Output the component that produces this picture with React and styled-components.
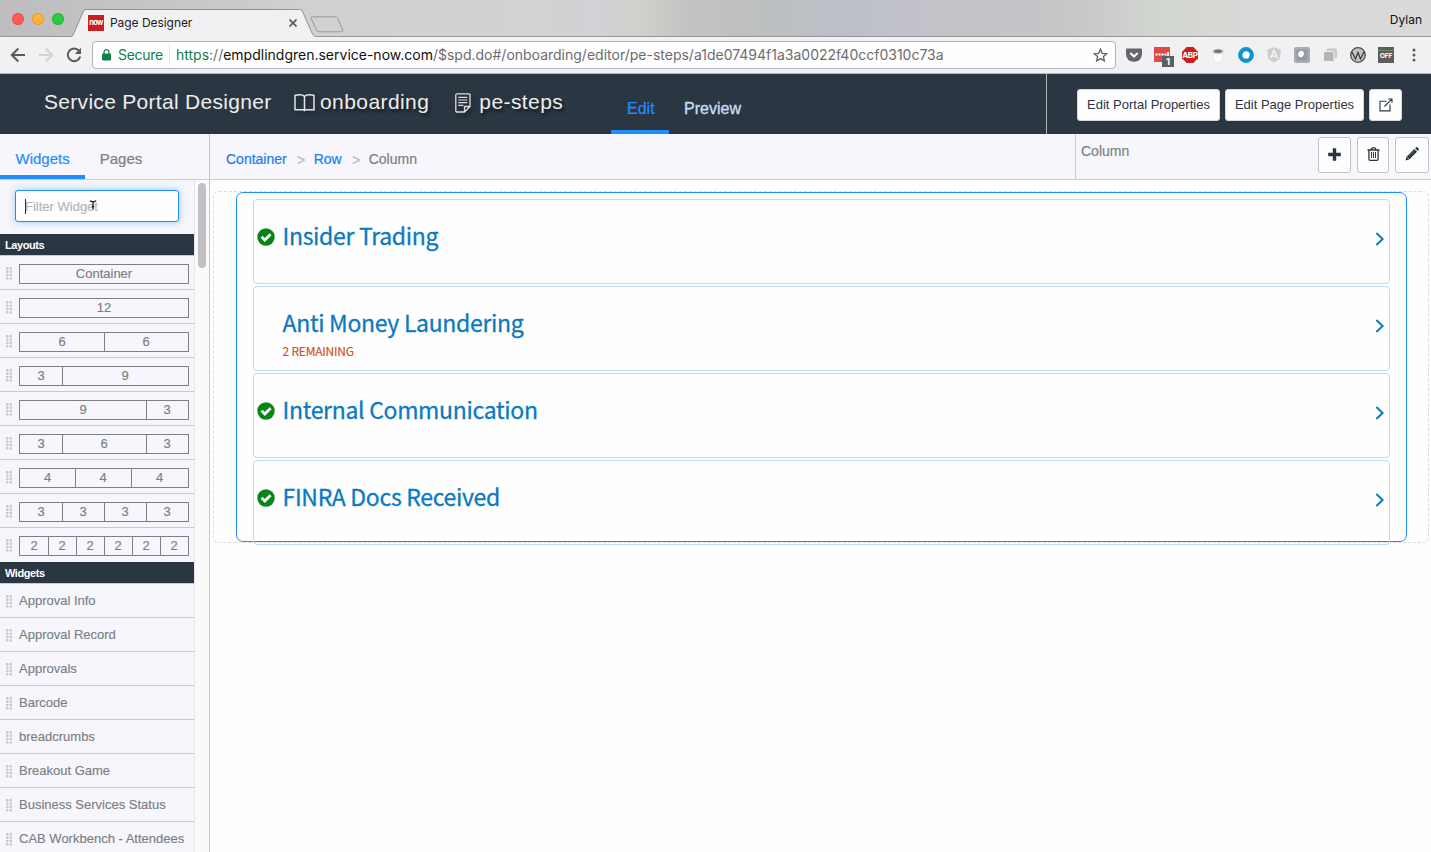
import React from "react";
import styled, { createGlobalStyle } from "styled-components";

const HELV = `"Liberation Sans", Arial, sans-serif`;
const UI = `Inter, Roboto, sans-serif`;
const SOURCE = `"Noto Sans CJK JP", "Noto Sans", sans-serif`;

const Global = createGlobalStyle`
  * { box-sizing: border-box; }
  html, body { margin: 0; padding: 0; background: #fdfefd; }
  body { font-family: ${HELV}; overflow: hidden; }
  svg { display: block; flex: none; }
`;

const Window = styled.div`
  width: 1431px;
  height: 852px;
  display: flex;
  flex-direction: column;
  overflow: hidden;
  background: #fdfefd;
`;

/* ---------- Browser chrome ---------- */

const TabStrip = styled.div`
  height: 37px;
  flex: none;
  display: flex;
  align-items: flex-end;
  border-bottom: 1px solid #97989a;
  background: linear-gradient(90deg, #bdbdbf 0, #c2c2c4 90px, #cbcbcc 240px, #d0d2d2 320px, #d0d3d0 550px, #d2d1d6 585px, #d2d0cc 640px, #c2c2c1 690px, #bcbfc0 770px, #bdc0ca 860px, #c4c3c9 950px, #c5c4c7 1040px, #c8cacb 1090px, #d2d6cf 1160px, #d6d8d4 1220px, #d9d9db 1260px, #dadadc 100%);
`;

const Lights = styled.div`
  display: flex;
  gap: 8px;
  align-self: flex-start;
  padding: 13px 0 0 12px;
  width: 72px;
`;

const Light = styled.i`
  width: 12px;
  height: 12px;
  border-radius: 50%;
  background: ${(p) => p.$color};
  box-shadow: inset 0 0 0 1px ${(p) => p.$edge};
`;

const Tab = styled.div`
  position: relative;
  width: 244px;
  height: 28px;
  margin-bottom: -1px;
  display: flex;
  align-items: center;
  padding: 0 0 0 16px;
  > * { position: relative; }
  > svg:first-child { position: absolute; left: 0; top: 0; }
`;

const Favicon = styled.span`
  width: 16px;
  height: 16px;
  background: #c91f22;
  color: #fff;
  font: 700 7.5px/16px ${UI};
  letter-spacing: -0.6px;
  text-align: center;
`;

const TabTitle = styled.span`
  margin-left: 6px;
  flex: 1;
  font: 400 12px/16px ${UI};
  letter-spacing: -0.05px;
  color: #1c1c1c;
`;

const TabClose = styled.span`
  margin-right: 19px;
`;

const NewTab = styled.span`
  margin: 0 0 3px -6px;
`;

const UserName = styled.span`
  margin: 0 9px 8px auto;
  font: 400 12px/16px ${UI};
  color: #111;
`;

const Toolbar = styled.div`
  height: 37px;
  flex: none;
  display: flex;
  align-items: center;
  border-bottom: 1px solid #b4b5b7;
  background: #f1f1f3;
  padding-left: 10px;
`;

const NavButtons = styled.div`
  display: flex;
  gap: 12px;
  width: 82px;
`;

const Omnibox = styled.div`
  width: 1024px;
  height: 28px;
  display: flex;
  align-items: center;
  padding: 0 7px 0 9px;
  border: 1px solid #b3b3b5;
  border-radius: 4px;
  background: #fefefe;
  font: 400 14px/20px ${UI};
`;

const Secure = styled.span`
  margin-left: 7px;
  border-right: 1px solid #e2e2e2;
  color: #12804a;
  width: 52px;
  letter-spacing: -0.3px;
  white-space: nowrap;
`;

const Url = styled.span`
  flex: 1;
  margin-left: 6px;
  color: #6d6d6d;
  white-space: nowrap;
  b { font-weight: 400; color: #12804a; }
  em { font-style: normal; color: #111; }
`;

const Extensions = styled.div`
  display: flex;
  gap: 12px;
  padding-left: 10px;
`;

/* ---------- Designer header ---------- */

const Header = styled.header`
  height: 60px;
  flex: none;
  display: flex;
  background: #2b3643;
`;

const Titles = styled.div`
  width: 611px;
  display: flex;
  align-items: flex-start;
  padding: 14px 0 0 44px;
  font-size: 21px;
  line-height: 28px;
  color: #ededec;
  letter-spacing: 0.42px;
  white-space: nowrap;
`;

const TitleLink = styled.span`
  display: flex;
  align-items: center;
  gap: ${(p) => p.$gap}px;
  margin-left: ${(p) => p.$left}px;
  text-shadow: 2px 3px 3px rgba(0, 0, 0, 0.5);
  svg { filter: drop-shadow(2px 3px 2px rgba(0, 0, 0, 0.4)); margin-top: 2px; }
`;

const ProductTitle = styled.span`
  width: 228px;
  letter-spacing: 0.3px;
`;

const ModeTab = styled.span`
  height: 60px;
  padding: 26px 14px 0 ${(p) => (p.$active ? 16 : 15.5)}px;
  font-size: 16px;
  line-height: 18px;
  -webkit-text-stroke: ${(p) => (p.$active ? 0.2 : 0.4)}px currentColor;
  color: ${(p) => (p.$active ? "#1f8efa" : "#c3dbf4")};
  border-bottom: ${(p) => (p.$active ? "4px solid #1f8efa" : "0")};
`;

const HeaderActions = styled.div`
  margin-left: auto;
  width: 385px;
  display: flex;
  align-items: flex-start;
  gap: 5px;
  padding: 15px 0 0 30px;
  border-left: 1px solid #b2b3b4;
`;

const HeaderButton = styled.button`
  width: ${(p) => p.$w}px;
  height: 32px;
  display: flex;
  align-items: center;
  justify-content: center;
  padding: 0;
  border: 1px solid #d4d8dc;
  border-radius: 3px;
  background: #fefefe;
  color: #2b3643;
  font: 13px/16px ${HELV};
  white-space: nowrap;
`;

/* ---------- Body ---------- */

const Body = styled.div`
  flex: 1;
  display: flex;
  min-height: 0;
`;

const Sidebar = styled.aside`
  width: 210px;
  flex: none;
  display: flex;
  flex-direction: column;
  border-right: 1px solid #c5c7cb;
  background: #f6f6fc;
`;

const SideTabs = styled.div`
  height: 46px;
  flex: none;
  display: flex;
  border-bottom: 1px solid #cbccd0;
`;

const SideTab = styled.span`
  height: 45px;
  padding: 15px 15px 0 ${(p) => (p.$active ? 15.5 : 15)}px;
  font-size: 15px;
  line-height: 20px;
  color: ${(p) => (p.$active ? "#1f8efa" : "#7c7f83")};
  -webkit-text-stroke: 0.2px currentColor;
  border-bottom: ${(p) => (p.$active ? "4px solid #1f8efa" : "0")};
`;

const SideScroll = styled.div`
  flex: 1;
  min-height: 0;
  display: flex;
`;

const SideList = styled.div`
  width: 194px;
  overflow: hidden;
`;

const ScrollTrack = styled.div`
  flex: 1;
  padding: 3px 3px 0 3px;
  border-left: 1px solid #e6e6ea;
  background: #fafafb;
`;

const ScrollThumb = styled.div`
  width: 8px;
  height: 85px;
  border-radius: 4px;
  background: #c1c1c3;
`;

const FilterWrap = styled.div`
  height: 54px;
  padding: 10px 15px 0;
`;

const FilterBox = styled.div`
  position: relative;
  width: 164px;
  height: 32px;
  display: flex;
  align-items: center;
  padding-left: 9px;
  border: 1px solid #1f8efa;
  border-radius: 3px;
  background: #fdfefd;
  box-shadow: 0 0 7px rgba(102, 175, 233, 0.65);
  font-size: 13px;
  color: #b1b5bb;
  -webkit-text-stroke: 0.15px currentColor;
`;

const Caret = styled.i`
  width: 1px;
  height: 15px;
  margin-right: -1px;
  background: #222;
`;

const Pointer = styled.span`
  position: absolute;
  left: 73px;
  top: 9px;
`;

const SectionHead = styled.div`
  height: 22px;
  padding-left: 5px;
  border-bottom: 1px solid #c9cacd;
  background: #2b3643;
  color: #fff;
  font-size: 11px;
  font-weight: 700;
  line-height: 22px;
  letter-spacing: -0.42px;
`;

const SideRow = styled.div`
  height: 34px;
  display: flex;
  align-items: center;
  padding: 1px 5px 0 6px;
  gap: 7px;
  border-bottom: 1px solid ${(p) => (p.$last ? "transparent" : "#c9cacd")};
  color: #7b7f83;
  font-size: 13px;
  line-height: 18px;
  white-space: nowrap;
  -webkit-text-stroke: 0.15px currentColor;
`;

const Columns = styled.div`
  width: 170px;
  height: 20px;
  margin-top: 1px;
  display: flex;
  border: 1px solid #7b8086;
`;

const Cell = styled.span`
  flex: ${(p) => p.$span} 1 0;
  min-width: 0;
  text-align: center;
  line-height: 18px;
  & + & { box-shadow: inset 1px 0 0 #7b8086; }
  &:first-child { ${(p) => p.$span === 4 && "flex: 0 0 55px;"} }
  &:last-child { ${(p) => p.$span === 4 && "flex: 0 0 57px;"} }
`;

const Main = styled.main`
  flex: 1;
  display: flex;
  flex-direction: column;
  min-width: 0;
`;

const SubBar = styled.div`
  height: 46px;
  flex: none;
  display: flex;
  border-bottom: 1px solid #cbccd0;
  background: #f6f6fc;
  font-size: 14px;
`;

const Crumbs = styled.div`
  width: 865px;
  display: flex;
  align-items: center;
  padding: 5px 0 0 16px;
`;

const Crumb = styled.span`
  color: ${(p) => (p.$link ? "#1a7cf5" : "#7c7f83")};
  -webkit-text-stroke: 0.2px currentColor;
`;

const CrumbSep = styled.span`
  width: 27px;
  padding: 1px 0 0 2px;
  text-align: center;
  color: #bcbec3;
  -webkit-text-stroke: 0.3px currentColor;
`;

const Selection = styled.div`
  flex: 1;
  display: flex;
  gap: 6px;
  padding: 3px 0 0 5px;
  border-left: 1px solid #c9cacd;
  color: #7c7f83;
  line-height: 28px;
  -webkit-text-stroke: 0.15px currentColor;
`;

const SelectionLabel = styled.span`
  flex: 1;
`;

const IconButton = styled.button`
  width: ${(p) => p.$w || 33}px;
  height: 36px;
  padding: 0 0 2px;
  display: flex;
  align-items: center;
  justify-content: center;
  border: 1px solid #bfc3c8;
  border-radius: 3px;
  background: #fdfefd;
  color: #2b3643;
`;

const Tools = styled.div`
  display: flex;
  gap: 6px;
  width: 113px;
`;

const Canvas = styled.div`
  flex: 1;
  padding: 11px 2px 0 3px;
`;

const ContainerBox = styled.div`
  height: 352px;
  padding: 0 21px 0 22px;
  border: 1px dashed #dcdddf;
  border-radius: 6px;
`;

const ColumnBox = styled.div`
  height: 350px;
  padding: 6px 16px 0;
  border: 1px solid #1f8efa;
  border-radius: 7px;
`;

const Steps = styled.div`
  display: flex;
  flex-direction: column;
  gap: 2px;
`;

const Step = styled.div`
  height: 85px;
  flex: none;
  display: flex;
  padding: 0 4px 0 3px;
  border: 1px solid #bbdcf8;
  border-radius: 4px;
`;

const StepStatus = styled.span`
  width: 25.5px;
  padding-top: 28px;
`;

const StepText = styled.div`
  flex: 1;
  padding-top: 18px;
  font-family: ${SOURCE};
`;

const StepTitle = styled.div`
  color: #0c7abf;
  font-size: 23px;
  line-height: 34px;
  letter-spacing: -0.31px;
  -webkit-text-stroke: 0.3px currentColor;
`;

const StepNote = styled.div`
  margin-top: 3px;
  color: #d4501c;
  font-size: 12px;
  line-height: 18px;
  letter-spacing: -0.22px;
  -webkit-text-stroke: 0.15px currentColor;
`;

const StepArrow = styled.span`
  padding-top: 32px;
`;

/* ---------- Drawings ---------- */

const Grip = () => (
  <svg width="6" height="13" viewBox="0 0 6 13" fill="#c6c8cc">
    {[0, 3.4, 6.8, 10.2].map((y) => (
      <React.Fragment key={y}>
        <rect x="0" y={y} width="2.4" height="2.4" rx="0.5" />
        <rect x="3.6" y={y} width="2.4" height="2.4" rx="0.5" />
      </React.Fragment>
    ))}
  </svg>
);

const NavIcon = ({ d, color }) => (
  <svg width="16" height="16" viewBox="0 0 16 16" fill="none" stroke={color} strokeWidth="2">
    <path d={d} />
  </svg>
);

const Check = () => (
  <svg width="18" height="18" viewBox="0 0 18 18">
    <circle cx="9" cy="9" r="8.7" fill="#078516" />
    <path d="M4.6 8.8 7.8 12 13.600 6.3" fill="none" stroke="#fdfefd" strokeWidth="2.8" />
  </svg>
);

const Chevron = () => (
  <svg width="10" height="14" viewBox="0 0 10 14" fill="none" stroke="#0c7abf" strokeWidth="2">
    <path d="M1.4 1 7.6 7 1.4 13" />
  </svg>
);

const Book = () => (
  <svg width="21" height="18" viewBox="0 0 21 18" fill="none" stroke="#e4e5e5" strokeWidth="1.5">
    <path d="M10.500 2.400C9.500 1.200 7.500.8 5.700.8 3.800.8 2.300 1 1 1.500V15.800H8.500Q9.800 15.800 10.500 16.500 11.200 15.800 12.500 15.800H20V1.500C18.700 1 17.200.8 15.300.8 13.500.8 11.500 1.200 10.500 2.400V16.500" />
  </svg>
);

const Note = () => (
  <svg width="16" height="20" viewBox="0 0 16 20" fill="none" stroke="#dfe0e0" strokeWidth="1.3">
    <path d="M15 .8v12.700L9.500 19H2.200Q.8 19 .8 17.700V2.200Q.8.8 2.200.8H13.800Q15 .8 15 2v11.500H9.500V19" />
    <path d="M3.300 4.300h9M3.300 7h9M3.300 9.700h9M3.300 12.400h5" strokeWidth="1.200" />
  </svg>
);

const External = () => (
  <svg width="14" height="14" viewBox="0 0 14 14" fill="none" stroke="#2b3643" strokeWidth="1.1">
    <path d="M7.500 3.200H1v9.700h10V6.500M5.500 8.500 12.800 1.200M9.200 1H13V4.800" />
  </svg>
);

const Plus = () => (
  <svg width="13" height="13" viewBox="0 0 13 13" fill="#2b3643">
    <path d="M4.800.3h3.400v4.500h4.600v3.400H8.200v4.500H4.800V8.200H.2V4.800h4.600z" />
  </svg>
);

const Trash = () => (
  <svg width="13" height="14" viewBox="0 0 13 14" fill="none" stroke="#2b3643" strokeWidth="1.3">
    <path d="M.5 3h12M4.200 3Q4.200.8 5.500.8h2Q8.800.8 8.800 3M1.900 3v9q0 1.300 1.300 1.300h6.600q1.300 0 1.300-1.300V3" />
    <path d="M4.500 5v6M6.500 5v6M8.500 5v6" strokeWidth="1" />
  </svg>
);

const Pencil = () => (
  <svg width="14" height="14" viewBox="0 0 14 14" fill="#2b3643">
    <path d="M9.300 2 12 4.700 4.200 12.500.5 13.500 1.500 9.800zM10.100 1.200 11.100.3q.6-.5 1.200 0l1.400 1.400q.5.6 0 1.200l-.9 1z" />
    <path d="M2.300 10.300 3.700 11.700" stroke="#fff" strokeWidth="0.8" />
    <path d="M4 9 8.700 4.300" stroke="#8b929a" strokeWidth="0.6" />
  </svg>
);

const Ext = ({ children, w = 16 }) => (
  <svg width={w} height="18" viewBox={`0 0 ${w} 18`} overflow="visible">
    {children}
  </svg>
);

const LAYOUTS = [
  ["Container"], [12], [6, 6], [3, 9], [9, 3], [3, 6, 3], [4, 4, 4], [3, 3, 3, 3], [2, 2, 2, 2, 2, 2],
];

const WIDGETS = [
  "Approval Info", "Approval Record", "Approvals", "Barcode", "breadcrumbs",
  "Breakout Game", "Business Services Status", "CAB Workbench - Attendees",
];

const STEPS = [
  { title: "Insider Trading", done: true },
  { title: "Anti Money Laundering", note: "2 REMAINING" },
  { title: "Internal Communication", done: true },
  { title: "FINRA Docs Received", done: true },
];

function Browser() {
  return (
    <>
      <TabStrip>
        <Lights>
          <Light $color="#fc5b56" $edge="#f0504b" />
          <Light $color="#f9b43a" $edge="#e59f2c" />
          <Light $color="#2dc844" $edge="#27bb3c" />
        </Lights>
        <Tab>
          <svg width="244" height="28" viewBox="0 0 244 28">
            <path d="M0 28V27.500Q1.200 26 2 24L11.500 2Q12.300.5 14 .5H227.500Q229.500.5 230.300 2L240 24Q241.500 27 243.500 27.500V28Z" fill="#f1f1f3" />
            <path d="M0 27.500Q1.200 26 2 24L11.500 2Q12.300.5 14 .5H227.500Q229.500.5 230.300 2L240 24Q241.500 27 243.500 27.500" fill="none" stroke="#8f9092" />
          </svg>
          <Favicon>now</Favicon>
          <TabTitle>Page Designer</TabTitle>
          <TabClose>
            <svg width="8" height="8" viewBox="0 0 8 8" stroke="#5a5a5a" strokeWidth="1.7">
              <path d="M.5.5 7.500 7.500M7.500.5.5 7.500" />
            </svg>
          </TabClose>
        </Tab>
        <NewTab>
          <svg width="34" height="17" viewBox="0 0 34 17">
            <path d="M2.500.8H25Q27 .8 28 2.500L32.800 14Q33.300 15.800 31.500 15.800H9Q7.300 15.800 6.500 14L1.200 2.500Q.8.8 2.500.8Z" fill="#d0d1d2" stroke="#97989a" />
          </svg>
        </NewTab>
        <UserName>Dylan</UserName>
      </TabStrip>
      <Toolbar>
        <NavButtons>
          <NavIcon color="#5a5a5a" d="M15 8H2M8.300 1.500 1.800 8l6.500 6.500" />
          <NavIcon color="#d2d3d4" d="M1 8h13M7.700 1.500 14.200 8l-6.500 6.500" />
          <svg width="16" height="16" viewBox="0 0 16 16">
            <path d="M13 3.800A6.300 6.300 0 1 0 14.200 9.500" fill="none" stroke="#5a5a5a" strokeWidth="2" />
            <path d="M15 .8V7H8.800z" fill="#5a5a5a" />
          </svg>
        </NavButtons>
        <Omnibox>
          <svg width="9" height="12" viewBox="0 0 9 12">
            <rect x="0" y="4.500" width="9" height="7" rx="1" fill="#12804a" />
            <path d="M2 5V3.200a2.500 2.500 0 0 1 5 0V5" fill="none" stroke="#12804a" strokeWidth="1.200" />
          </svg>
          <Secure>Secure</Secure>
          <Url>
            <b>https</b>://<em>empdlindgren.service-now.com</em>/$spd.do#/onboarding/editor/pe-steps/a1de07494f1a3a0022f40ccf0310c73a
          </Url>
          <svg width="15" height="14" viewBox="0 0 15 14" fill="none" stroke="#5f6163" strokeWidth="1.300">
            <path d="M7.500 1.200 9.300 5.300 13.700 5.700 10.400 8.600 11.400 12.900 7.500 10.600 3.600 12.900 4.600 8.600 1.300 5.700 5.700 5.300Z" />
          </svg>
        </Omnibox>
        <Extensions>
          <Ext>
            <path d="M0 3.500Q0 2.500 1 2.500H15Q16 2.500 16 3.500V8Q15.500 15.500 8 15.800.500 15.500 0 8Z" fill="#64666a" />
            <path d="M4.300 7 8 10.500 11.700 7" fill="none" stroke="#fff" strokeWidth="2" />
          </Ext>
          <Ext>
            <rect y="1" width="16" height="15" fill="#dc4b46" />
            <path d="M1.500 8.500h2M4.500 8.500h2M7.500 8.500h2M10.500 8.500h2M14 6v4" stroke="#fff" strokeWidth="1.800" />
            <rect x="8" y="10" width="12" height="11" fill="#5d5f60" />
            <text x="14" y="19" fill="#fff" fontSize="9.500" fontWeight="700" fontFamily="Inter" textAnchor="middle">1</text>
          </Ext>
          <Ext>
            <path d="M4.700 1h6.600L16 5.700v6.600L11.300 17H4.700L0 12.300V5.700z" fill="#c9201e" />
            <text x="7.800" y="12" fill="#fff" fontSize="8" letterSpacing="-0.400" fontWeight="700" fontFamily="Inter" textAnchor="middle">ABP</text>
          </Ext>
          <Ext>
            <path d="M2.500 5.500h11l-1.300 9.700Q8 17.500 3.800 15.200z" fill="#fbfbfb" stroke="#dedee0" strokeWidth="0.500" />
            <ellipse cx="8" cy="5.500" rx="6" ry="2.700" fill="#cfcfd0" />
            <ellipse cx="8" cy="5.200" rx="4" ry="1.700" fill="#707274" />
          </Ext>
          <Ext>
            <circle cx="8" cy="9" r="5.800" fill="#fff" stroke="#0b93d2" strokeWidth="4.200" />
          </Ext>
          <Ext>
            <path d="M8 1.200 14.800 3.700 13.700 13 8 16.500 2.300 13 1.200 3.700z" fill="#cbccce" />
            <path d="M4.500 12.500 8 4 11.500 12.500M5.700 10h4.600" fill="none" stroke="#f5f5f6" strokeWidth="1.500" />
          </Ext>
          <Ext>
            <rect y="1" width="16" height="16" rx="2" fill="#a9adb1" />
            <rect x="2.500" y="3.500" width="11" height="11" fill="#929ba3" />
            <ellipse cx="7" cy="8" rx="2.800" ry="3.300" fill="#fff" transform="rotate(25 7 8)" />
          </Ext>
          <Ext>
            <rect x="4.500" y="2.500" width="10.500" height="10" rx="1.500" fill="#c9cacb" />
            <rect x="1.500" y="5.500" width="10.500" height="10" rx="1.500" fill="#b4b5b7" stroke="#f1f1f3" />
          </Ext>
          <Ext>
            <circle cx="8" cy="9" r="7.300" fill="#c2c2c2" stroke="#4a4a4a" strokeWidth="1.300" />
            <path d="M2 6 5.500 13 8 6.500 10.500 13 14 6" fill="none" stroke="#3f3f3f" strokeWidth="1.300" />
          </Ext>
          <Ext>
            <rect y="1" width="16" height="16" fill="#5c5e5c" />
            <path d="M0 4.500h16" stroke="#6f8a66" />
            <text x="8" y="12.200" fill="#fff" fontSize="6.800" letterSpacing="-0.300" fontWeight="700" fontFamily="Inter" textAnchor="middle">OFF</text>
          </Ext>
          <Ext>
            <g fill="#5a5a5a">
              <circle cx="8" cy="4" r="1.500" />
              <circle cx="8" cy="9" r="1.500" />
              <circle cx="8" cy="14" r="1.500" />
            </g>
          </Ext>
        </Extensions>
      </Toolbar>
    </>
  );
}

export default function App() {
  return (
    <Window>
      <Global />
      <Browser />
      <Header>
        <Titles>
          <ProductTitle>Service Portal Designer</ProductTitle>
          <TitleLink $left={22} $gap={5}><Book />onboarding</TitleLink>
          <TitleLink $left={26} $gap={8}><Note />pe-steps</TitleLink>
        </Titles>
        <ModeTab $active>Edit</ModeTab>
        <ModeTab>Preview</ModeTab>
        <HeaderActions>
          <HeaderButton $w={143}>Edit Portal Properties</HeaderButton>
          <HeaderButton $w={139}>Edit Page Properties</HeaderButton>
          <HeaderButton $w={33}><External /></HeaderButton>
        </HeaderActions>
      </Header>
      <Body>
        <Sidebar>
          <SideTabs>
            <SideTab $active>Widgets</SideTab>
            <SideTab>Pages</SideTab>
          </SideTabs>
          <SideScroll>
            <SideList>
              <FilterWrap>
                <FilterBox>
                  <Caret />
                  Filter Widget
                  <Pointer>
                    <svg width="8" height="12" viewBox="0 0 8 12" fill="none" stroke="#111" strokeWidth="1.200">
                      <path d="M.8 1.200Q3 .8 4 2.500 5 .8 7.200 1.200M4 2.500V9.500M2.800 6.500h2.400" />
                    </svg>
                  </Pointer>
                </FilterBox>
              </FilterWrap>
              <SectionHead>Layouts</SectionHead>
              {LAYOUTS.map((cells, i) => (
                <SideRow key={i} $last={i === LAYOUTS.length - 1}>
                  <Grip />
                  <Columns>
                    {cells.map((c, j) => (
                      <Cell key={j} $span={typeof c === "number" ? c : 12}>{c}</Cell>
                    ))}
                  </Columns>
                </SideRow>
              ))}
              <SectionHead>Widgets</SectionHead>
              {WIDGETS.map((w) => (
                <SideRow key={w}><Grip />{w}</SideRow>
              ))}
            </SideList>
            <ScrollTrack><ScrollThumb /></ScrollTrack>
          </SideScroll>
        </Sidebar>
        <Main>
          <SubBar>
            <Crumbs>
              <Crumb $link>Container</Crumb>
              <CrumbSep>&gt;</CrumbSep>
              <Crumb $link>Row</Crumb>
              <CrumbSep>&gt;</CrumbSep>
              <Crumb>Column</Crumb>
            </Crumbs>
            <Selection>
              <SelectionLabel>Column</SelectionLabel>
              <Tools>
                <IconButton><Plus /></IconButton>
                <IconButton $w={32}><Trash /></IconButton>
                <IconButton $w={34}><Pencil /></IconButton>
              </Tools>
            </Selection>
          </SubBar>
          <Canvas>
            <ContainerBox>
              <ColumnBox>
                <Steps>
                  {STEPS.map((s) => (
                    <Step key={s.title}>
                      <StepStatus>{s.done && <Check />}</StepStatus>
                      <StepText>
                        <StepTitle>{s.title}</StepTitle>
                        {s.note && <StepNote>{s.note}</StepNote>}
                      </StepText>
                      <StepArrow><Chevron /></StepArrow>
                    </Step>
                  ))}
                </Steps>
              </ColumnBox>
            </ContainerBox>
          </Canvas>
        </Main>
      </Body>
    </Window>
  );
}
